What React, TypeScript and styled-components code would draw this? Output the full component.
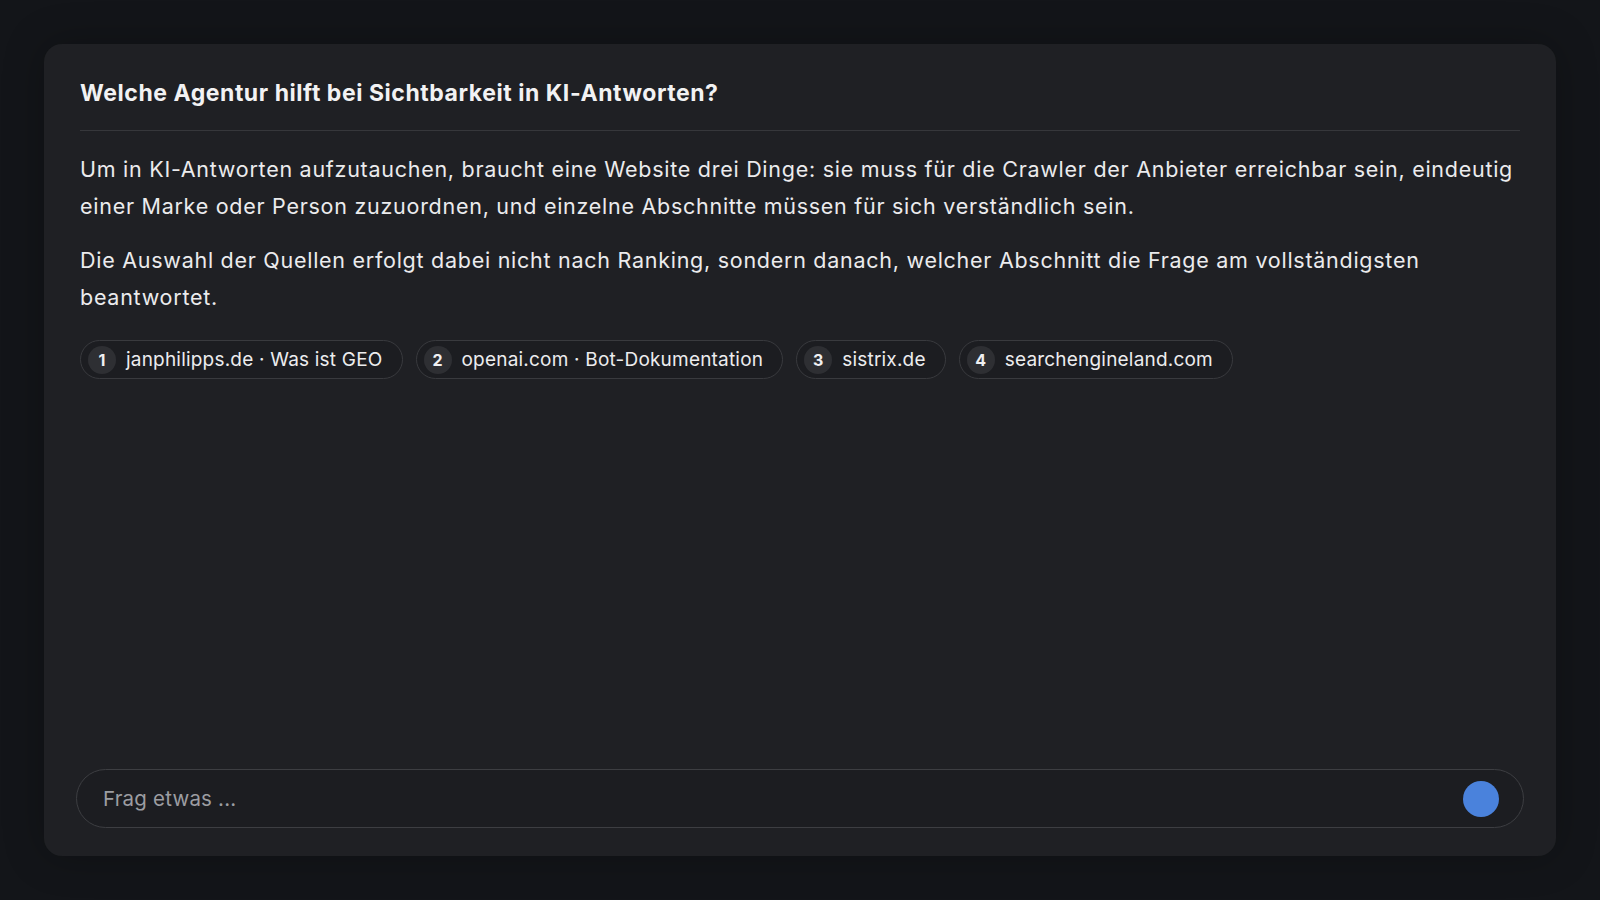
import React from 'react';
import styled, { createGlobalStyle } from 'styled-components';

const GlobalStyle = createGlobalStyle`
  html, body {
    margin: 0;
    padding: 0;
    background: #131519;
    font-family: Inter, "Noto Sans", "Liberation Sans", sans-serif;
    -webkit-font-smoothing: antialiased;
  }
`;

const Page = styled.div`
  box-sizing: border-box;
  height: 100vh;
  padding: 44px;
  display: flex;
`;

const Card = styled.section`
  flex: 1;
  display: flex;
  flex-direction: column;
  background: #1f2024;
  border-radius: 18px;
  padding: 28px 32px 28px;
  box-shadow: 0 0 40px rgba(0, 0, 0, 0.25);
`;

const Answer = styled.div`
  padding: 0 4px;
  color: #ebebed;
`;

const Question = styled.h1`
  margin: 0;
  font-size: 23px;
  letter-spacing: 0.55px;
  line-height: 42px;
  font-weight: 700;
  color: #f2f2f3;
  padding-bottom: 16px;
  border-bottom: 1.5px solid #36373b;
`;

const Paragraph = styled.p`
  margin: 0 0 17px;
  font-size: 21.5px;
  letter-spacing: 0.73px;
  line-height: 37px;
  font-weight: 400;

  &:first-of-type {
    margin-top: 20px;
  }
`;

const Sources = styled.div`
  display: flex;
  flex-wrap: wrap;
  gap: 13px;
  margin-top: 24px;
`;

const Chip = styled.a`
  display: inline-flex;
  align-items: center;
  gap: 10px;
  height: 39px;
  box-sizing: border-box;
  padding: 0 19px 0 7px;
  border: 1.5px solid #393a3e;
  border-radius: 20px;
  background: #1c1d21;
  color: #ececee;
  font-size: 19px;
  letter-spacing: 0.2px;
  text-decoration: none;
`;

const Badge = styled.span`
  width: 28px;
  height: 28px;
  border-radius: 50%;
  background: #2e2f33;
  display: inline-flex;
  align-items: center;
  justify-content: center;
  font-size: 16px;
  font-weight: 700;
  letter-spacing: 0;
  color: #f0f0f2;
`;

const InputBar = styled.form`
  margin-top: auto;
  height: 59px;
  box-sizing: border-box;
  display: flex;
  align-items: center;
  padding: 0 24px 0 24px;
  border: 1.5px solid #3d3e42;
  border-radius: 30px;
  background: #1c1d21;
`;

const Field = styled.input`
  flex: 1;
  border: none;
  outline: none;
  background: transparent;
  font-family: inherit;
  font-size: 20.5px;
  letter-spacing: 0.2px;
  color: #e9e9eb;

  &::placeholder {
    color: #9c9da2;
  }
`;

const Send = styled.button`
  width: 36px;
  height: 36px;
  border-radius: 50%;
  border: none;
  background: #4a82dc;
  padding: 0;
  cursor: pointer;
`;

const sources = [
  'janphilipps.de · Was ist GEO',
  'openai.com · Bot-Dokumentation',
  'sistrix.de',
  'searchengineland.com',
];

export default function App() {
  return (
    <>
      <GlobalStyle />
      <Page>
        <Card>
          <Answer>
            <Question>Welche Agentur hilft bei Sichtbarkeit in KI-Antworten?</Question>
            <Paragraph>
              Um in KI-Antworten aufzutauchen, braucht eine Website drei Dinge: sie muss für die
              Crawler der Anbieter erreichbar sein, eindeutig einer Marke oder Person zuzuordnen,
              und einzelne Abschnitte müssen für sich verständlich sein.
            </Paragraph>
            <Paragraph>
              Die Auswahl der Quellen erfolgt dabei nicht nach Ranking, sondern danach, welcher
              Abschnitt die Frage am vollständigsten beantwortet.
            </Paragraph>
            <Sources>
              {sources.map((label, i) => (
                <Chip key={label} href='#'>
                  <Badge>{i + 1}</Badge>
                  {label}
                </Chip>
              ))}
            </Sources>
          </Answer>
          <InputBar onSubmit={(e) => e.preventDefault()}>
            <Field placeholder='Frag etwas ...' />
            <Send type='submit' aria-label='Senden' />
          </InputBar>
        </Card>
      </Page>
    </>
  );
}
